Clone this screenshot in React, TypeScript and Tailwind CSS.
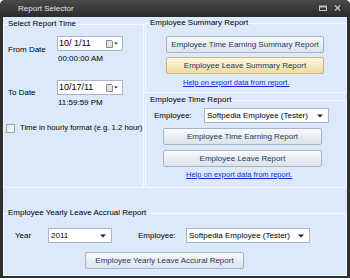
import React from 'react';

function Button({ label, hot, className }: { label: string; hot?: boolean; className: string }) {
  return (
    <div
      className={`flex h-[17px] items-center justify-center rounded-[2px] border text-[8px] leading-[10px] text-[#1e3a5f] ${
        hot
          ? 'border-[#c9b47a] bg-gradient-to-b from-[#fdf7df] to-[#ecdca2]'
          : 'border-[#a9b4c3] bg-gradient-to-b from-[#f8fafc] to-[#dbe2ea]'
      } ${className}`}
    >
      {label}
    </div>
  );
}

function Arrow() {
  return (
    <svg width="6" height="4" viewBox="0 0 6 4">
      <path d="M0 0.5h6L3 3.5z" fill="#222" />
    </svg>
  );
}

function Select({ value, className }: { value: string; className: string }) {
  return (
    <div
      className={`flex h-[15px] items-center justify-between border border-[#a9b6c8] bg-white pl-[2px] pr-[5px] text-[8px] leading-[10px] ${className}`}
    >
      <span>{value}</span>
      <Arrow />
    </div>
  );
}

function DatePicker({ value }: { value: string }) {
  return (
    <div className="flex h-[15px] w-[66px] items-center border border-[#a9b6c8] bg-white pl-[1px] pr-[4px] text-[9px] leading-[11px]">
      <span className="flex-1 whitespace-pre">{value}</span>
      <svg width="12" height="8" viewBox="0 0 12 8">
        <path d="M0.5 0.5h5l1 1v6h-6z" fill="#e4e4e4" stroke="#8a8a8a" strokeWidth="1" />
        <path d="M8 2.5h4L10 4.5z" fill="#333" />
      </svg>
    </div>
  );
}

function HelpLink({ className }: { className: string }) {
  return (
    <div className={`text-[7.5px] leading-[10px] text-[#0b2ed8] underline ${className}`}>
      Help on export data from report.
    </div>
  );
}

export default function App() {
  return (
    <div className="h-[280px] w-[350px] bg-white font-['Liberation_Sans',Arial,sans-serif] text-[8px] leading-[10px] text-black">
      <div className="flex h-[278px] flex-col rounded-t-[5px] bg-[#2f2f2f]">
        <div className="flex h-[17px] items-center rounded-t-[5px] bg-gradient-to-b from-[#4a4a4a] to-[#2b2b2b] pl-[18px] pr-[7px] text-[#e4e4e4]">
          <span className="flex-1">Report Selector</span>
          <svg width="24" height="7" viewBox="0 0 24 7">
            <rect x="0.5" y="1" width="7" height="4.5" fill="none" stroke="#c4c4c4" />
            <rect x="0.5" y="1" width="7" height="1.5" fill="#c4c4c4" />
            <path d="M16 0.5l5 5M21 0.5l-5 5" stroke="#c4c4c4" strokeWidth="1.3" />
          </svg>
        </div>
        <div className="mx-[3px] mb-[2px] flex flex-1 flex-col bg-[#dce9fa]">
          <div className="flex h-[171px]">
            <fieldset className="mt-[2px] h-[169px] w-[141px] min-w-0 shrink-0 border border-[#f4f8fe] px-[4px]">
              <legend>Select Report Time</legend>
              <div className="mt-[7px] flex">
                <div className="w-[49px] pt-[9px]">From Date</div>
                <div>
                  <DatePicker value="10/ 1/11" />
                  <div className="mt-[3px] pl-[1px]">00:00:00 AM</div>
                </div>
              </div>
              <div className="mt-[16px] flex">
                <div className="w-[49px] pt-[8px]">To Date</div>
                <div>
                  <DatePicker value="10/17/11" />
                  <div className="mt-[3px] pl-[1px]">11:59:59 PM</div>
                </div>
              </div>
              <div className="ml-[-2px] mt-[15px] flex items-center gap-[5px] whitespace-nowrap">
                <div className="h-[9px] w-[9px] shrink-0 border border-[#9aa3ae] bg-gradient-to-br from-[#e8e8e8] to-[#fafafa]" />
                <span className="text-[7.7px]">Time in hourly format (e.g. 1.2 hour)</span>
              </div>
            </fieldset>
            <div className="ml-[1px] flex w-[202px] shrink-0 flex-col">
              <fieldset className="mt-[1px] h-[75px] min-w-0 border border-[#f4f8fe] px-[4px]">
                <legend>Employee Summary Report</legend>
                <Button label="Employee Time Earning Summary Report" className="ml-[16px] mt-[8px] w-[158px]" />
                <Button label="Employee Leave Summary Report" hot className="ml-[16px] mt-[4px] w-[158px]" />
                <HelpLink className="ml-[33px] mt-[4px]" />
              </fieldset>
              <fieldset className="mt-[2px] h-[93px] min-w-0 border border-[#f4f8fe] px-[4px]">
                <legend>Employee Time Report</legend>
                <div className="ml-[4px] mt-[3px] flex items-center">
                  <span className="w-[50px]">Employee:</span>
                  <Select value="Softpedia Employee (Tester)" className="w-[125px]" />
                </div>
                <Button label="Employee Time Earning Report" className="ml-[13px] mt-[5px] w-[159px]" />
                <Button label="Employee Leave Report" className="ml-[13px] mt-[5px] w-[159px]" />
                <HelpLink className="ml-[36px] mt-[3px]" />
              </fieldset>
            </div>
          </div>
          <fieldset className="mt-[20px] h-[68px] min-w-0 border border-[#f4f8fe] px-[4px]">
            <legend>Employee Yearly Leave Accrual Report</legend>
            <div className="mt-[10px] flex items-center">
              <span className="ml-[7px] w-[33px]">Year</span>
              <Select value="2011" className="w-[64px]" />
              <span className="ml-[26px] w-[48px]">Employee:</span>
              <Select value="Softpedia Employee (Tester)" className="w-[124px]" />
            </div>
            <Button label="Employee Yearly Leave Accural Report" className="ml-[77px] mt-[9px] w-[159px]" />
          </fieldset>
        </div>
      </div>
    </div>
  );
}
